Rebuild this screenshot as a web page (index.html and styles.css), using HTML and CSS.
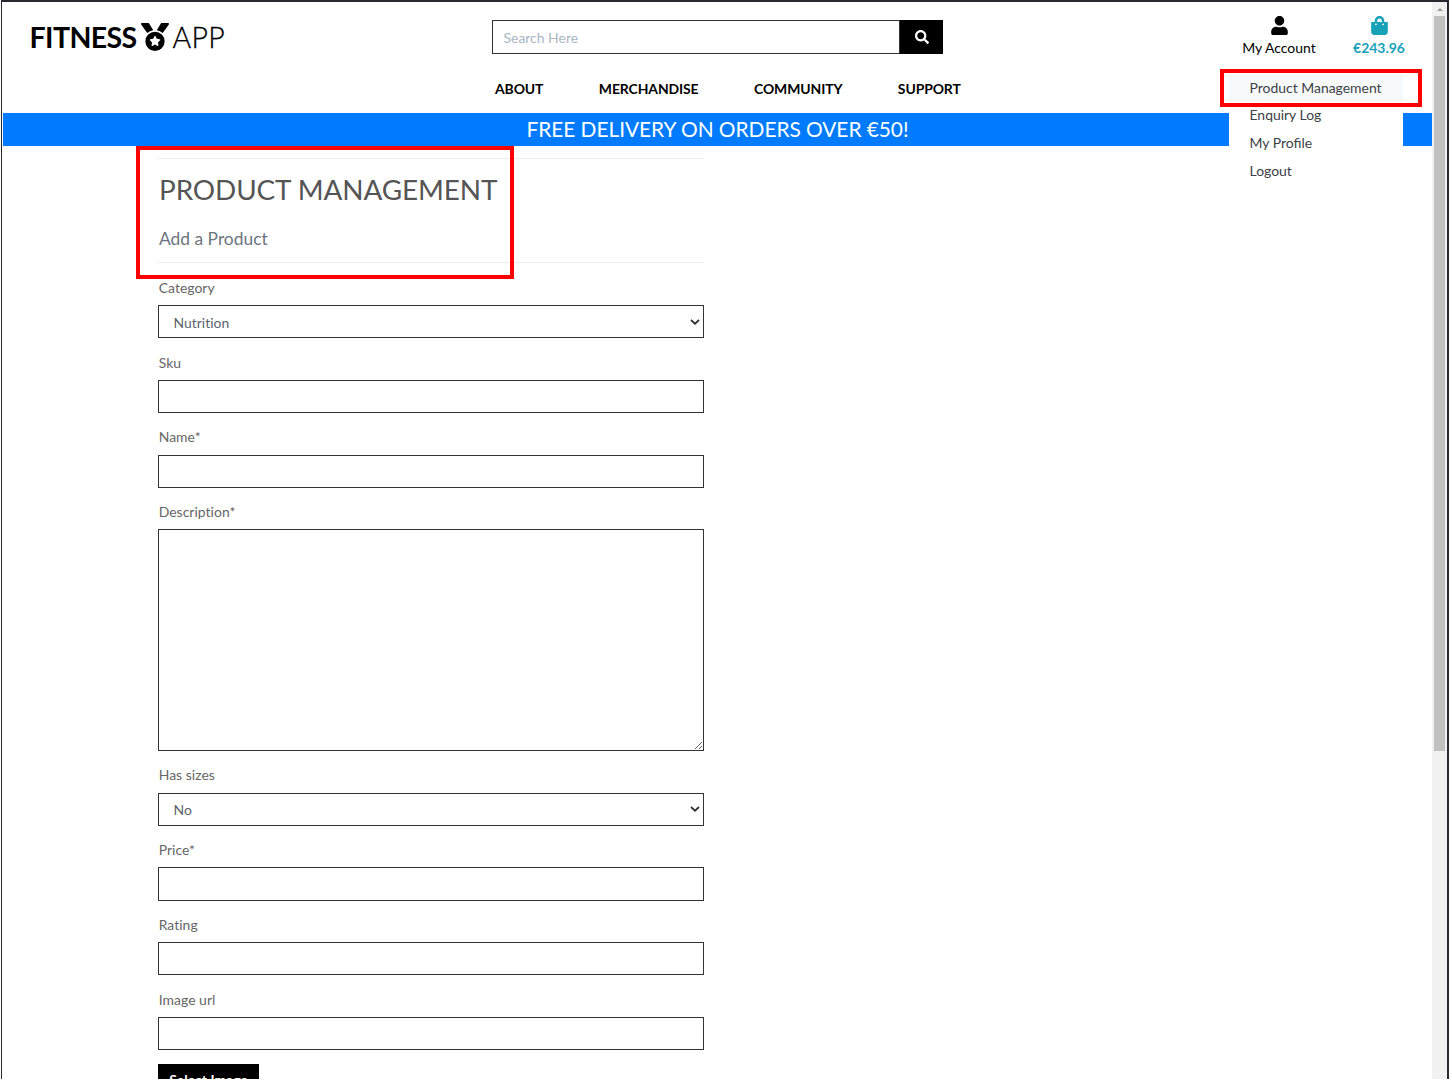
FILE: index.html
```html
<!DOCTYPE html>
<html lang="en">
<head>
<meta charset="utf-8">
<title>Fitness App - Product Management</title>
<link rel="stylesheet" href="styles.css">
</head>
<body>
<div class="window">
  <div class="page">
    <header class="header">
      <div class="topbar">
        <a class="logo"><span class="logo-bold">FITNESS</span><svg class="medal" viewBox="0 0 512 512"><path d="M223.7 130.8 149.1 7.8A16 16 0 0 0 135.400 0H16.100C3 0-4.600 14.700 2.900 25.300l111.300 159c29.700-27.800 67.500-47.100 109.500-53.500zM495.900 0H376.600c-5.600 0-10.800 2.900-13.700 7.700l-74.600 123c42 6.400 79.900 25.700 109.500 53.400l111.200-158.900C516.600 14.700 509 0 495.900 0zM256 160a176 176 0 1 0 0 352 176 176 0 0 0 0-352zm92.500 157.300-37.900 37 9 52.200c1.600 9.400-8.300 16.500-16.700 12.100L256 393.900l-46.900 24.700c-8.400 4.500-18.300-2.800-16.700-12.100l9-52.200-37.900-37c-6.800-6.600-3.100-18.200 6.400-19.600l52.400-7.600 23.400-47.500c4.200-8.500 16.400-8.500 20.600 0l23.400 47.500 52.400 7.600c9.400 1.400 13.200 13 6.400 19.600z"/></svg><span class="logo-light">APP</span></a>
        <div class="search">
          <input class="search-input" type="text" placeholder="Search Here">
          <button class="search-btn"><svg viewBox="0 0 512 512"><path d="M505 442.700 405.300 343c-4.500-4.500-10.600-7-17-7H372c27.600-35.300 44-79.700 44-128C416 93.100 322.900 0 208 0S0 93.100 0 208s93.100 208 208 208c48.300 0 92.700-16.400 128-44v16.300c0 6.400 2.500 12.500 7 17l99.700 99.700c9.400 9.400 24.600 9.400 33.900 0l28.300-28.300c9.400-9.400 9.400-24.600.1-34zM208 336c-70.700 0-128-57.200-128-128 0-70.700 57.200-128 128-128 70.700 0 128 57.200 128 128 0 70.700-57.200 128-128 128z"/></svg></button>
        </div>
        <div class="account">
          <svg class="user" viewBox="0 0 448 512"><path d="M224 256c70.700 0 128-57.300 128-128S294.700 0 224 0 96 57.300 96 128s57.300 128 128 128zm89.600 32h-16.700c-22.200 10.200-46.900 16-72.900 16s-50.600-5.800-72.900-16h-16.700C60.200 288 0 348.200 0 422.400V464c0 26.500 21.500 48 48 48h352c26.500 0 48-21.500 48-48v-41.600c0-74.200-60.200-134.400-134.400-134.400z"/></svg>
          <span class="account-label">My Account</span>
          <nav class="dropdown">
            <a class="item active">Product Management</a>
            <a class="item">Enquiry Log</a>
            <a class="item">My Profile</a>
            <a class="item">Logout</a>
          </nav>
        </div>
        <div class="bag">
          <svg class="bag-icon" viewBox="0 0 448 512"><path d="M352 160v-32C352 57.400 294.600 0 224 0S96 57.400 96 128v32H0v272c0 44.200 35.800 80 80 80h288c44.200 0 80-35.800 80-80V160h-96zm-192-32c0-35.300 28.700-64 64-64s64 28.700 64 64v32H160v-32zm160 120a24 24 0 1 1 0-48 24 24 0 0 1 0 48zm-192 0a24 24 0 1 1 0-48 24 24 0 0 1 0 48z"/></svg>
          <span class="bag-total">€243.96</span>
        </div>
      </div>
      <nav class="nav"><a>ABOUT</a><a>MERCHANDISE</a><a>COMMUNITY</a><a>SUPPORT</a></nav>
    </header>
    <div class="banner"><span>FREE DELIVERY ON ORDERS OVER €50!</span></div>
    <main class="content">
      <div class="heading">
        <h2>PRODUCT MANAGEMENT</h2>
        <h5>Add a Product</h5>
      </div>
      <form class="form">
        <div class="group"><label>Category</label><div class="control select"><span>Nutrition</span><svg viewBox="0 0 10 6"><path d="M1 1l4 3.700L9 1"/></svg></div></div>
        <div class="group"><label>Sku</label><input class="control" type="text"></div>
        <div class="group"><label>Name*</label><input class="control" type="text"></div>
        <div class="group"><label>Description*</label><textarea class="control area"></textarea></div>
        <div class="group"><label>Has sizes</label><div class="control select"><span>No</span><svg viewBox="0 0 10 6"><path d="M1 1l4 3.700L9 1"/></svg></div></div>
        <div class="group"><label>Price*</label><input class="control" type="text"></div>
        <div class="group"><label>Rating</label><input class="control" type="text"></div>
        <div class="group"><label>Image url</label><input class="control" type="text"></div>
        <button class="btn" type="button">Select Image</button>
      </form>
    </main>
  </div>
  <div class="scrollbar"><div class="arrow"></div><div class="thumb"></div></div>
  <div class="callout callout-menu"></div>
  <div class="callout callout-title"></div>
</div>
</body>
</html>
```
FILE: styles.css
```css
* { box-sizing: border-box; }
body { margin: 0; background: #fff; font-family: Lato, sans-serif; font-size: 13.94px; line-height: 20.9px; color: #555; overflow: hidden; }
.window { position: relative; display: flex; width: 1448px; height: 1079px; margin-left: 1px; overflow: hidden; border: solid #2b2930; border-width: 2px 2px 0 1px; }
.page { flex: 1; min-width: 0; padding-left: 1px; }
.header { height: 111px; color: #000; }
.topbar { display: flex; height: 68px; }
.logo { display: flex; align-items: center; width: 489px; height: 68px; padding: 2px 0 0 26.500px; font-size: 28.5px; }
.logo-bold { font-weight: 700; width: 108px; letter-spacing: -0.6px; }
.logo-light { font-weight: 300; margin-left: 4px; letter-spacing: 0.3px; -webkit-text-stroke: 0.3px #000; }
.medal { width: 28px; height: 28px; margin-left: 3px; }
.search { display: flex; width: 451px; height: 33.500px; margin-top: 18px; }
.search-input { flex: 1; min-width: 0; border: 1px solid #333; padding: 3px 10.500px 0; border-radius: 0; font: inherit; }
.search-input::placeholder { color: #aab7c4; opacity: 1; }
.search-btn { width: 43px; border: 0; background: #000; padding: 0; display: flex; align-items: center; justify-content: center; }
.search-btn svg { width: 14px; height: 14px; fill: #fff; }
.account, .bag { position: relative; display: flex; flex-direction: column; align-items: center; padding-top: 14px; }
.account { width: 76px; margin-left: 298px; }
.bag { width: 60px; margin-left: 32px; color: #17a2b8; font-weight: 700; }
.user, .bag-icon { width: 17px; height: 19px; fill: currentColor; margin-bottom: 2.600px; }
.dropdown { position: absolute; top: 72px; left: -12px; width: 174px; height: 120px; background: #fff; z-index: 2; }
.item { display: block; height: 27.900px; padding: 3.500px 20.500px; color: #3c4146; }
.item.active { background: #f8f9fa; }
.nav { display: flex; gap: 55.500px; padding: 9px 0 0 492px; font-weight: 700; letter-spacing: -0.1px; }
.banner { height: 33px; background: #007bff; color: #fff; text-align: center; font-size: 20.900px; line-height: 31px; letter-spacing: -0.05px; }
.content { width: 546px; margin-left: 155px; padding-top: 12px; }
.heading { height: 105px; border: solid #eee; border-width: 1px 0; padding: 13px 0 0 1px; }
h2 { margin: 0; font-size: 27.900px; font-weight: 400; line-height: 34px; letter-spacing: -0.1px; }
h5 { margin: 21.500px 0 0; font-size: 17.400px; font-weight: 400; line-height: 22px; color: #6c757d; }
.form { padding-top: 14.500px; font-variant-ligatures: no-common-ligatures; }
.group { margin-bottom: 13.900px; }
label { display: block; height: 20.900px; margin-bottom: 6.800px; padding: 0.400px 0 0 0.700px; color: #666; letter-spacing: 0.03px; }
.control { display: block; width: 100%; height: 33.200px; border: 1px solid #333; border-radius: 0; padding: 0 15px; background: #fff; font: inherit; font-variant-ligatures: inherit; color: #5a626a; }
.area { height: 221.500px; }
.select { display: flex; align-items: center; justify-content: space-between; padding: 3px 3px 0 14.500px; }
.select svg { width: 10px; height: 6px; fill: none; stroke: #333; stroke-width: 1.800; margin-bottom: 3px; }
.btn { display: block; width: 101px; height: 33px; padding: 1px 0 0; border: 0; background: #000; color: #fff; font: inherit; font-weight: 700; }
.scrollbar { width: 15px; background: #f1f1f1; padding: 6px 2px 0 2px; }
.arrow { width: 0; margin: 0 auto; border: solid transparent; border-width: 0 3px 3px; border-bottom-color: #999; }
.thumb { height: 735px; margin-top: 5px; background: #c1c1c1; }
.callout { position: absolute; border: 4px solid #f00; z-index: 3; }
.callout-menu { left: 1218px; top: 67px; width: 202px; height: 38px; }
.callout-title { left: 134px; top: 144px; width: 378px; height: 133px; }
```
